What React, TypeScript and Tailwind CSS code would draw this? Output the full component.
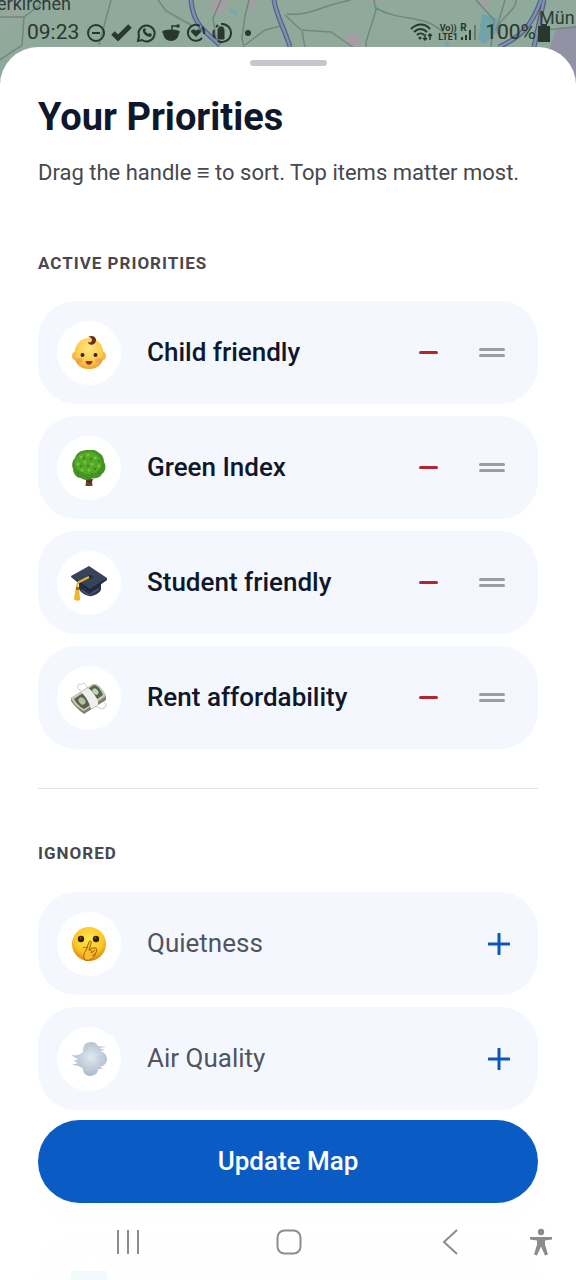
import { useState, type ReactNode } from "react";

type Priority = { id: string; label: string; icon: ReactNode };

function BabyIcon() {
  return (
    <svg viewBox="0 0 36 36" className="size-9" aria-hidden="true">
      <defs>
        <radialGradient id="baby" cx="50%" cy="35%" r="65%">
          <stop offset="0" stopColor="#ffe680" />
          <stop offset="0.7" stopColor="#fbcb4a" />
          <stop offset="1" stopColor="#e9a52e" />
        </radialGradient>
      </defs>
      <ellipse cx="4" cy="21" rx="3" ry="4" fill="#f4bb45" />
      <ellipse cx="32" cy="21" rx="3" ry="4" fill="#f4bb45" />
      <path d="M18 3C10 3 4 9 3.500 18c-1 10 5 16 14.500 16s15.500-6 14.500-16C32 9 26 3 18 3Z" fill="url(#baby)" />
      <ellipse cx="8.500" cy="25.500" rx="3.500" ry="2.600" fill="#f38b5b" opacity=".55" />
      <ellipse cx="27.500" cy="25.500" rx="3.500" ry="2.600" fill="#f38b5b" opacity=".55" />
      <path d="M17 2c6-3 10 2 7 6-2 3-7 2-7-1 2 1 4 0 4-2s-2-3-4-3Z" fill="#6a2c1c" />
      <circle cx="11.500" cy="20" r="2" fill="#402218" />
      <circle cx="24.500" cy="20" r="2" fill="#402218" />
      <path d="M14.500 26h7c0 5-7 5-7 0Z" fill="#a12d20" />
    </svg>
  );
}

function TreeIcon() {
  return (
    <svg viewBox="0 0 36 36" className="size-9" aria-hidden="true">
      <path d="M15.500 26h5l1 10h-7Z" fill="#68402c" />
      <path d="M14 29l3 2 1-4 1 4 4-3-3 5h-3Z" fill="#50301f" />
      <path
        d="M17 0c6-1 9 1 11 3 4 2 5 6 5 9 3 5 1 10-2 12-2 4-7 5-10 4-4 3-9 2-11 0-5 0-8-5-8-9-2-5 0-9 2-11 1-4 5-7 7-7 2-1 4-1 6-1Z"
        fill="#439523"
      />
      <path d="M16 2c6-1 13 3 14 10 1 8-5 13-13 12S3 18 4 11c1-5 6-9 12-9Z" fill="#55a928" />
      <g fill="#7fc438">
        <circle cx="10" cy="7" r="1.500" />
        <circle cx="17" cy="5" r="1.500" />
        <circle cx="24" cy="8" r="1.500" />
        <circle cx="7" cy="14" r="1.500" />
        <circle cx="14" cy="12" r="1.500" />
        <circle cx="21" cy="14" r="1.500" />
        <circle cx="28" cy="16" r="1.500" />
        <circle cx="11" cy="20" r="1.500" />
        <circle cx="18" cy="20" r="1.500" />
      </g>
      <g fill="#3a8a20">
        <circle cx="13" cy="8" r="1.200" />
        <circle cx="20" cy="9" r="1.200" />
        <circle cx="28" cy="11" r="1.200" />
        <circle cx="10" cy="16" r="1.200" />
        <circle cx="17" cy="16" r="1.200" />
        <circle cx="24" cy="19" r="1.200" />
        <circle cx="7" cy="23" r="1.200" />
        <circle cx="21" cy="24" r="1.200" />
        <circle cx="28" cy="23" r="1.200" />
      </g>
    </svg>
  );
}

function CapIcon() {
  return (
    <svg viewBox="0 0 36 36" className="size-9" aria-hidden="true">
      <path d="m8 16 11 8 11-9v9c0 4-9 8-12 7-4-1-9-4-10-7Z" fill="#252f49" />
      <path d="m10 24 8 5 10-6v2l-10 6-8-5Z" fill="#45536e" />
      <path d="M0 11 18 1l18 12-17 13Z" fill="#36435b" />
      <path d="m0 11 19 13 17-11v2L19 27 0 12Z" fill="#1e273c" />
      <ellipse cx="18.500" cy="12" rx="3" ry="1.800" fill="#202a40" />
      <path d="M18 12 8 17c-2 1-2 3-2 6" stroke="#e9b42f" strokeWidth="2.200" fill="none" />
      <path d="M5 22h3l1 13c-2 1-4 1-6-1Z" fill="#efb522" />
      <path d="m5 22 3 0v3H5Z" fill="#9d6c1b" />
    </svg>
  );
}

function MoneyIcon() {
  return (
    <svg viewBox="0 0 36 36" className="size-9" aria-hidden="true">
      <path
        d="M12 12C8 11 5 7 8 4c2 1 3 0 5-1 2 2 4 4 3 7M24 27c4-1 6 3 9 1 3-1 2-5 0-6-2-2-5-1-7 1"
        fill="#fff"
        stroke="#c7cbca"
        strokeWidth="1"
      />
      <path d="M0 18 22 4c5-1 10 6 13 12v4L13 34C7 30 3 25 0 21Z" fill="#81816e" />
      <path d="M0 18 22 4c5-1 10 6 13 12L13 31C7 28 3 24 0 18Z" fill="#c8c9b5" />
      <path d="m3 19 9-6 9 11-8 5c-4-2-8-6-10-10Z" fill="#56634c" />
      <path d="m17 9 6-4c4 1 7 5 9 10l-6 4Z" fill="#506749" />
      <ellipse cx="11" cy="21" rx="3" ry="4" transform="rotate(-40 11 21)" fill="#b7bda0" />
      <ellipse cx="24.500" cy="11.500" rx="2.500" ry="3.500" transform="rotate(-40 24.500 11.500)" fill="#c5d0b7" />
      <path d="m10 12 7-4c4 2 7 7 10 13v4l-7 4c-2-8-6-13-10-17Z" fill="#eeeeea" />
    </svg>
  );
}

function ShushIcon() {
  return (
    <svg viewBox="0 0 36 36" className="size-9" aria-hidden="true">
      <defs>
        <radialGradient id="shush" cx="50%" cy="35%" r="62%">
          <stop offset="0" stopColor="#ffe84f" />
          <stop offset="0.700" stopColor="#fbc524" />
          <stop offset="1" stopColor="#df8d13" />
        </radialGradient>
      </defs>
      <circle cx="18" cy="18" r="17" fill="url(#shush)" />
      <circle cx="10" cy="13" r="3.200" fill="#37200e" />
      <circle cx="25" cy="13" r="3.200" fill="#37200e" />
      <circle cx="9.500" cy="12" r="0.800" fill="#96763e" />
      <circle cx="24.500" cy="12" r="0.800" fill="#96763e" />
      <path
        d="M14 34c-2-4-1-7 1-10l3-8c1-2 3-1 2 2l-2 6 3-2 4 0 1 2-2 5c-2 4-5 6-10 5Z"
        fill="#f9bd25"
        stroke="#a76316"
        strokeWidth="1"
      />
      <path d="m20 27 4-3M21 30l4-3M18 24c2 0 3 1 2 3M12 22c2-1 3-1 5 0" stroke="#a76316" strokeWidth="1" fill="none" />
    </svg>
  );
}

function WindIcon() {
  return (
    <svg viewBox="0 0 36 36" className="size-9" aria-hidden="true">
      <defs>
        <radialGradient id="puff" cx="55%" cy="45%" r="60%">
          <stop offset="0" stopColor="#e1e8ef" />
          <stop offset="1" stopColor="#a6b7c9" />
        </radialGradient>
      </defs>
      <path
        d="M0 14c5 1 9 0 12-3-1-6 3-10 8-10 4 0 6 2 7 4l8 1-7 1 6 2-5 1c4 1 7 4 7 8s-3 7-7 8l3 2-5 0c0 4-3 7-8 7-4 0-7-3-7-7-3-3-6-4-11-4l6-2-4-2 4-2Z"
        fill="url(#puff)"
      />
      <path d="M16 9c0-3 3-5 6-4M15 26c1 4 6 4 8 1M28 15c3 1 3 5 1 7" stroke="#c0ccd8" strokeWidth="1.500" fill="none" />
    </svg>
  );
}

function MapBackdrop() {
  return (
    <svg
      viewBox="0 0 576 96"
      preserveAspectRatio="xMidYMin slice"
      className="absolute inset-x-0 top-0 h-24 w-full bg-[#8fa99a]"
      aria-hidden="true"
    >
      <path d="M0 0h24v20L0 32Z" fill="#96a79d" />
      <path d="M214 0h14l-6 14-12-2ZM345 33l17 2-2 12-15-2ZM248 0h8l-4 15ZM366 0h12v3ZM477 0h10l4 10Z" fill="#a49ea4" />
      <path d="M556 28 576 26v54h-20l-6-32Z" fill="#9193a5" />
      <path d="m482 14 15 4v14l-12 12-7-4Z" fill="#71a3ab" />
      <path d="m230 10 7 4M445 42l4 4" stroke="#72a7b1" strokeWidth="3" />
      <g stroke="#73877f" strokeWidth="1.500" fill="none">
        <path d="M0 17h24l22-17M24 17l-2 28-22 15M111 0l-4 15-8 30M158 0l8 11 25 14M221 0l-8 18 4 27M244 47l-2-9 3-22 4-16M245 45l20-15 20-5" />
        <path d="M287 14c25 2 32-8 64-14M285 15l16 15 30 2 26 18M302 30l3 18M374 0l2 10-10 32 0 5M376 8c25 15 49 4 70 27M476 0l18 20-3 27M505 0l-9 30M516 0c1 12-22 20-18 34M534 31l42-4" />
      </g>
      <g fill="none" strokeLinejoin="round">
        <path d="M191 0c2 22 10 29 29 45M274 0c2 15 11 30 16 47M541 0c-10 28-21 37-42 47M544 0l-10 47" stroke="#50628c" strokeWidth="5" />
        <path d="M191 0c2 22 10 29 29 45M274 0c2 15 11 30 16 47M541 0c-10 28-21 37-42 47M544 0l-10 47" stroke="#7f91ad" strokeWidth="2.500" />
      </g>
      <g fontFamily="Roboto, sans-serif" fontSize="18" fill="#303b3a">
        <text x="-3" y="10">erkirchen</text>
        <text x="539" y="24">Mün</text>
      </g>
    </svg>
  );
}

function StatusBar() {
  return (
    <header className="relative flex h-[47px] items-center justify-between pt-[19px] pr-[26px] pl-[27px] text-[21px] text-[#29382f]">
      <div className="flex items-center gap-2">
        <span>09:23</span>
        <svg viewBox="0 0 168 20" className="h-5 w-[168px]" fill="none" stroke="currentColor" strokeWidth="2" aria-hidden="true">
          <circle cx="9" cy="10" r="8" />
          <path d="M5 10h8" />
          <path d="m26 10 5 5 12-12" strokeWidth="5" />
          <path d="M51 18l1-5a8 8 0 1 1 3 4Z" />
          <path d="M56 6c-1 4 3 8 8 8l1-3-3-1-1 1-3-3 1-1-1-2Z" fill="currentColor" stroke="none" />
          <path d="M76 9h16c0 12-16 12-16 0Z" fill="currentColor" stroke="none" />
          <ellipse cx="84" cy="9" rx="9" ry="2.500" fill="currentColor" stroke="none" />
          <path d="M85 8V3l5 0" strokeWidth="1.500" />
          <circle cx="91" cy="3" r="1.800" fill="currentColor" stroke="none" />
          <path d="M113 3a8 8 0 1 0 2 12M115 4a8 8 0 0 1 2 7" />
          <path d="m109 14-5-5c0-3 4-3 5-1 1-2 5-2 5 1Z" fill="currentColor" stroke="none" />
          <path d="M134 1a9 9 0 1 1-3 17M128 15a9 9 0 0 1-1-8M129 4l2-2" />
          <path d="M131 6h1V4h4v2h1v10h-6Z" fill="currentColor" stroke="currentColor" strokeWidth="1" />
          <circle cx="161" cy="10" r="3" fill="currentColor" stroke="none" />
        </svg>
      </div>
      <div className="flex items-center">
        <svg viewBox="0 0 24 20" className="mr-[2px] h-5 w-6" fill="none" stroke="currentColor" strokeWidth="2" aria-hidden="true">
          <path d="M1 6c6-6 14-6 19 0M4 9c4-4 9-4 13 0M7 12c2-2 5-2 7 0" />
          <circle cx="10" cy="15" r="1.500" fill="currentColor" stroke="none" />
          <path d="M15 11v6m-2-2 2 2 2-2M20 17v-6m-2 2 2-2 2 2" strokeWidth="1.500" />
        </svg>
        <span className="flex w-6 flex-col text-center text-[9px] leading-[9px] font-bold">
          <span>Vo))</span>
          <span>LTE1</span>
        </span>
        <span className="relative mr-2 h-5 w-[17px]">
          <span className="absolute -top-px left-0 text-[10px] leading-[12px] font-bold">R</span>
          <svg viewBox="0 0 17 20" className="h-5 w-full" stroke="currentColor" strokeWidth="2" aria-hidden="true">
            <path d="M2 17v-3M6 17v-5M10 17V7" />
            <path d="M15 17V2" opacity=".4" />
          </svg>
        </span>
        <span>100%</span>
        <svg viewBox="0 0 12 18" className="ml-[2px] h-[18px] w-3" aria-hidden="true">
          <path d="M3 2V0h6v2h3v16H0V2Z" fill="currentColor" />
        </svg>
      </div>
    </header>
  );
}

function Card({ icon, children }: { icon: ReactNode; children?: ReactNode }) {
  return (
    <li className="flex h-[103px] items-center rounded-[38px] bg-[#f4f8fe] pr-[22px] pl-[19px]">
      <span className="mr-[26px] flex size-16 shrink-0 items-center justify-center rounded-full bg-white">{icon}</span>
      {children}
    </li>
  );
}

function SectionTitle({ children }: { children: ReactNode }) {
  return <h2 className="text-[17px] leading-6 font-bold tracking-[1px] text-[#48484c]">{children}</h2>;
}

const initialActive: Priority[] = [
  { id: "child", label: "Child friendly", icon: <BabyIcon /> },
  { id: "green", label: "Green Index", icon: <TreeIcon /> },
  { id: "student", label: "Student friendly", icon: <CapIcon /> },
  { id: "rent", label: "Rent affordability", icon: <MoneyIcon /> },
];

const initialIgnored: Priority[] = [
  { id: "quiet", label: "Quietness", icon: <ShushIcon /> },
  { id: "air", label: "Air Quality", icon: <WindIcon /> },
];

export default function App() {
  const [active, setActive] = useState(initialActive);
  const [ignored, setIgnored] = useState(initialIgnored);

  const remove = (item: Priority) => {
    setActive(active.filter((p) => p.id !== item.id));
    setIgnored([...ignored, item]);
  };

  const add = (item: Priority) => {
    setIgnored(ignored.filter((p) => p.id !== item.id));
    setActive([...active, item]);
  };

  return (
    <div className="relative flex h-screen flex-col overflow-hidden font-[Roboto,sans-serif]">
      <MapBackdrop />
      <StatusBar />

      <main className="relative min-h-0 flex-1 overflow-hidden rounded-t-[38px] bg-white px-[38px] pt-[13px]">
        <div className="mx-auto h-[6px] w-[77px] rounded-full bg-[#c8c5d0]" />
        <h1 className="mt-[27px] text-[38px] leading-[48px] font-bold text-[#0f172a]">Your Priorities</h1>
        <p className="mt-4 text-[22px] leading-8 text-[#48484c]">Drag the handle ≡ to sort. Top items matter most.</p>

        <section className="mt-[62px]">
          <SectionTitle>ACTIVE PRIORITIES</SectionTitle>
          <ul className="mt-[26px] flex flex-col gap-3">
            {active.map((p) => (
              <Card key={p.id} icon={p.icon}>
                <span className="flex-1 text-[26px] font-medium text-[#0f172a]">{p.label}</span>
                <button
                  aria-label={`Remove ${p.label}`}
                  onClick={() => remove(p)}
                  className="flex size-12 items-center justify-center"
                >
                  <span className="h-[3px] w-[19px] rounded-full bg-[#b3262e]" />
                </button>
                <button
                  aria-label={`Reorder ${p.label}`}
                  className="ml-4 flex size-12 flex-col items-center justify-center gap-[3px]"
                >
                  <span className="h-[3px] w-[26px] rounded-full bg-[#9b9da3]" />
                  <span className="h-[3px] w-[26px] rounded-full bg-[#9b9da3]" />
                </button>
              </Card>
            ))}
          </ul>
        </section>

        <hr className="mt-[39px] border-[#e2e2e6]" />

        <section className="mt-[52px]">
          <SectionTitle>IGNORED</SectionTitle>
          <ul className="mt-[27px] flex flex-col gap-3">
            {ignored.map((p) => (
              <Card key={p.id} icon={p.icon}>
                <span className="flex-1 text-[26px] text-[#52545e]">{p.label}</span>
                <button
                  aria-label={`Add ${p.label}`}
                  onClick={() => add(p)}
                  className="flex h-12 w-[34px] items-center justify-center"
                >
                  <svg viewBox="0 0 22 22" className="size-[22px]" aria-hidden="true">
                    <path d="M11 1v20M1 11h20" stroke="#0b57b7" strokeWidth="3" strokeLinecap="round" />
                  </svg>
                </button>
              </Card>
            ))}
            <Card icon={null} />
            <Card icon={<span className="size-9 bg-[#7cc8f0]" />} />
          </ul>
        </section>
      </main>

      <footer className="absolute inset-x-0 bottom-0 bg-white/90 pt-2">
        <div className="px-[38px]">
          <button className="h-[83px] w-full rounded-full bg-[#0b5bc5] text-[26px] font-medium text-white">Update Map</button>
        </div>
        <nav className="flex h-[77px] items-center pr-[25px] pl-[47px] text-[#8c8c8e]">
          <button aria-label="Recent apps" className="flex flex-1 justify-center">
            <svg viewBox="0 0 26 26" className="size-[26px]" stroke="currentColor" strokeWidth="2">
              <path d="M3 1v24M13 1v24M23 1v24" />
            </svg>
          </button>
          <button aria-label="Home" className="flex flex-1 justify-center">
            <svg viewBox="0 0 26 26" className="size-[26px]" stroke="currentColor" strokeWidth="2" fill="none">
              <rect x="1.500" y="1.500" width="23" height="23" rx="7" />
            </svg>
          </button>
          <button aria-label="Back" className="flex flex-1 justify-center">
            <svg viewBox="0 0 26 26" className="size-[26px]" stroke="currentColor" strokeWidth="2" fill="none">
              <path d="M20 1 7 13l13 12" />
            </svg>
          </button>
          <button aria-label="Accessibility" className="flex w-5 justify-center">
            <svg viewBox="0 0 22 28" className="h-7 w-[22px] shrink-0" fill="currentColor">
              <circle cx="11" cy="4" r="3.200" />
              <path d="M0 9h22v2.500l-7 1v4l3 10-3 1-4-9-4 9-3-1 3-10v-4l-7-1Z" />
            </svg>
          </button>
        </nav>
      </footer>
    </div>
  );
}
